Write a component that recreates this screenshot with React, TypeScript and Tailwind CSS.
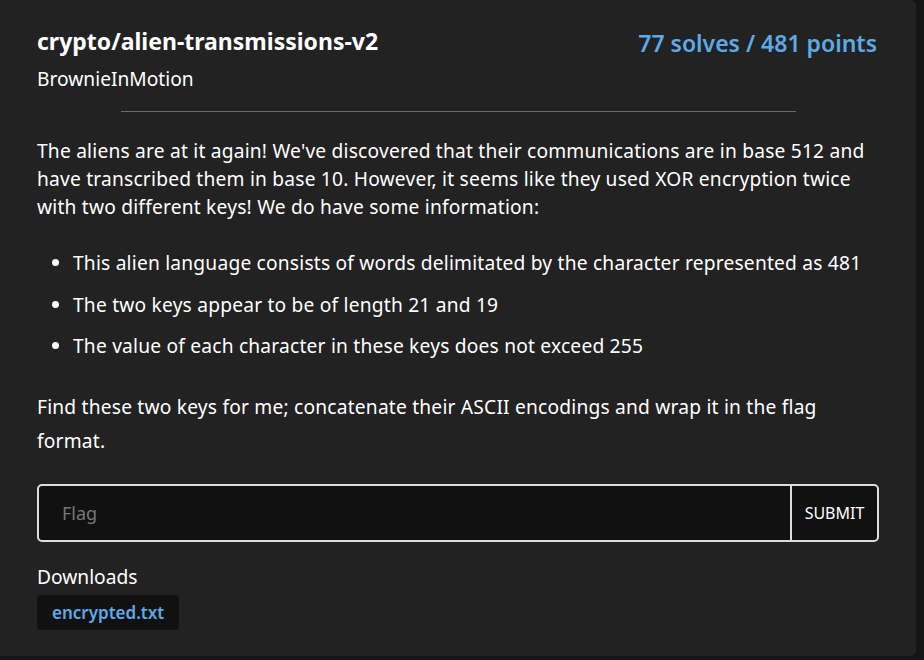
import React from "react";

export default function App() {
  return (
    <div className="w-[924px] h-[660px] bg-[#151515] overflow-hidden" style={{ fontFamily: "'Noto Sans', sans-serif" }}>
      <div className="w-[916px] h-[656px] bg-[#222222] rounded-r-md px-[37px] pt-[27px] text-white">
        <div className="flex justify-between items-start">
          <div>
            <div className="text-[23px] font-bold leading-[28px] text-white">crypto/alien-transmissions-v2</div>
            <div className="text-[19.2px] leading-[24px] mt-[12px]">BrownieInMotion</div>
          </div>
          <div className="text-[23px] font-semibold leading-[28px] text-[#5eaae6] pr-[2px] mt-[2px]">77 solves / 481 points</div>
        </div>
        <div className="mx-auto w-[675px] h-px bg-[#6a6a6a] mt-[20px]" />
        <div className="mt-[25px] text-[19.2px] leading-[28px] tracking-[0.2px]">
          <p>
            The aliens are at it again! We've discovered that their communications are in base 512 and have transcribed them in base 10. However, it seems like they used XOR encryption twice with two different keys! We do have some information:
          </p>
          <ul className="list-disc pl-[36px] mt-[28px] flex flex-col gap-[13.5px]">
            <li>This alien language consists of words delimitated by the character represented as 481</li>
            <li>The two keys appear to be of length 21 and 19</li>
            <li>The value of each character in these keys does not exceed 255</li>
          </ul>
          <p className="mt-[30px] leading-[34px]">
            Find these two keys for me; concatenate their ASCII encodings and wrap it in the flag format.
          </p>
        </div>
        <div className="mt-[26px] flex h-[58px] border-2 border-[#dddddd] rounded-[5px] bg-[#111111] overflow-hidden">
          <input
            className="flex-1 bg-transparent outline-none px-[23px] text-[18px] text-white placeholder:text-[#777777]"
            placeholder="Flag"
          />
          <button className="w-[87px] border-l-2 border-[#dddddd] text-[16px] text-white">SUBMIT</button>
        </div>
        <div className="mt-[23px] text-[19.2px] leading-[24px]">Downloads</div>
        <div className="mt-[6px]">
          <span className="inline-block bg-[#111111] rounded-[4px] px-[15px] py-[5px] text-[17px] font-semibold text-[#5eaae6] leading-[25px]">encrypted.txt</span>
        </div>
      </div>
    </div>
  );
}
